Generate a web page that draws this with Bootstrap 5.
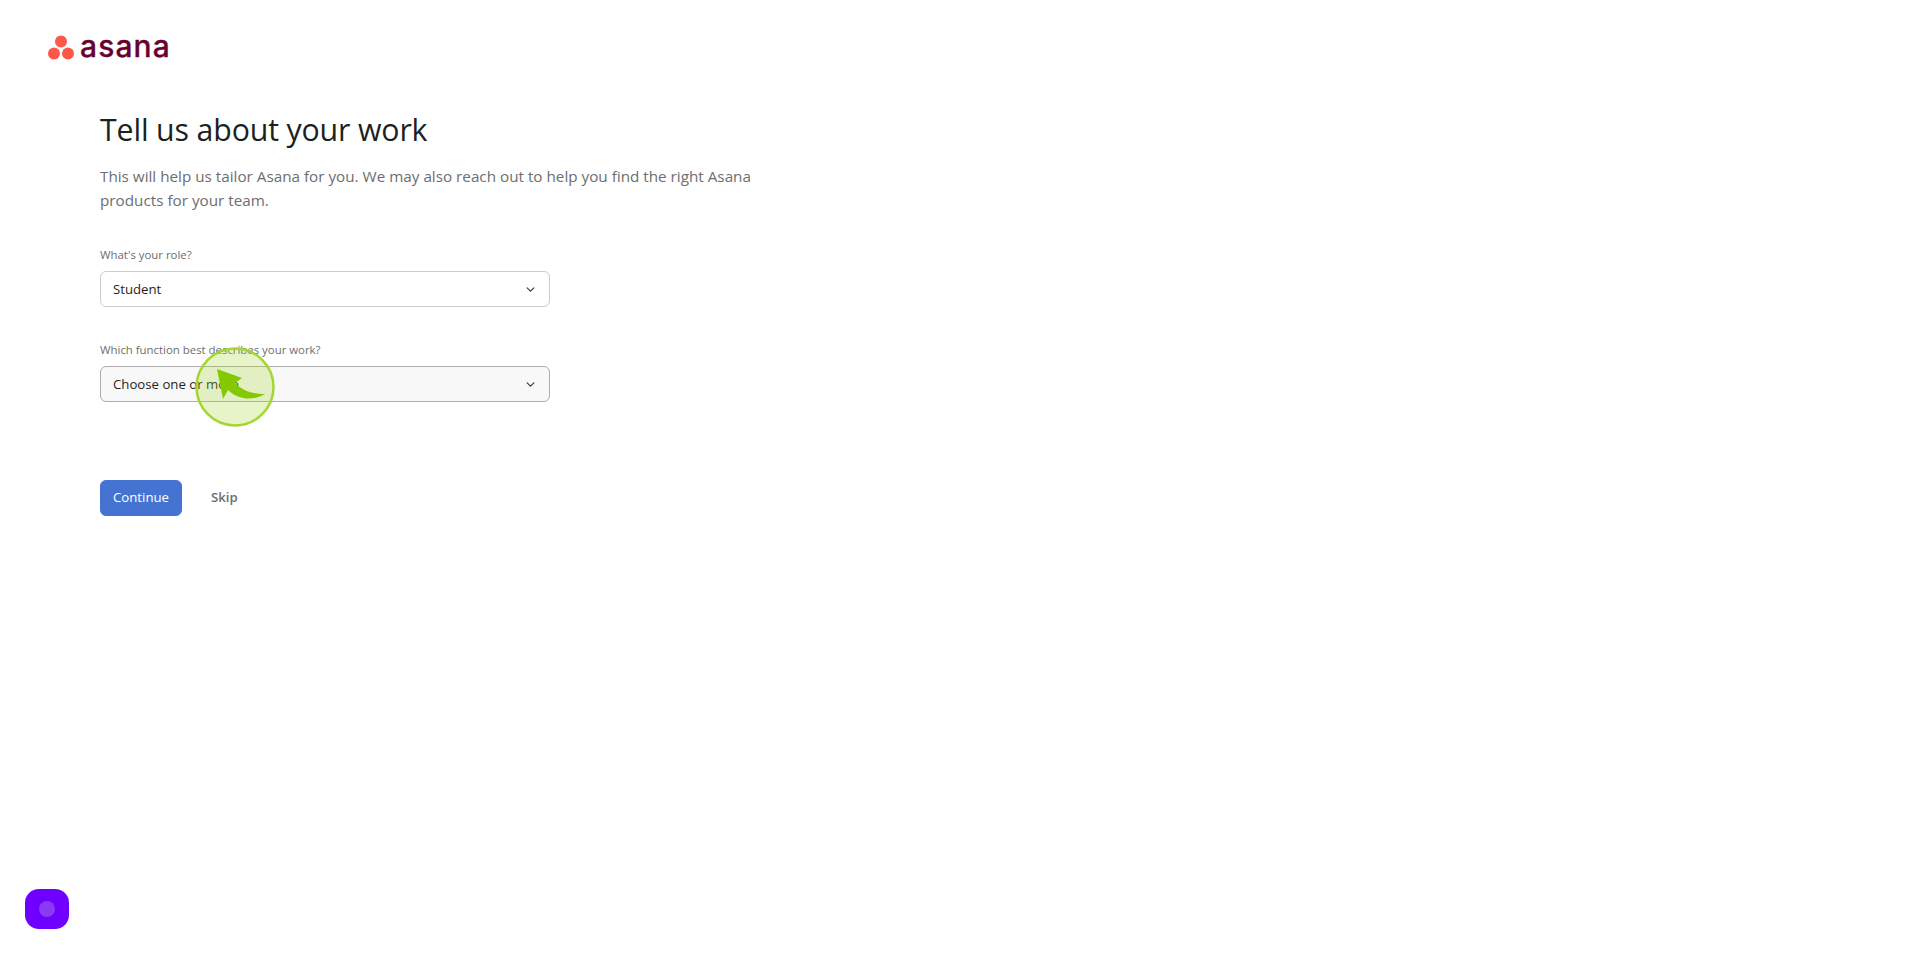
<!DOCTYPE html>
<html lang="en">

<head>
    <meta charset="UTF-8" />
    <meta name="viewport" content="width=device-width, initial-scale=1.0" />
    <title>Tell us about your work</title>
    <link href="https://cdn.jsdelivr.net/npm/bootstrap@5.3.0/dist/css/bootstrap.min.css" rel="stylesheet">
    <style>
        body,
        html {
            height: 100%;
            margin: 0;
            background-color: white;
            font-family: "Open Sans", "Noto Sans", sans-serif;
        }

        .page-wrap {
            min-height: 953px;
        }

        .top-logo {
            padding: 31px 0 0 48px;
            height: 109px;
            gap: 6px;
        }

        .logo-name {
            font-family: Inter, sans-serif;
            font-size: 30px;
            font-weight: 500;
            line-height: 30px;
            color: #690031;
            letter-spacing: 1.1px;
            -webkit-text-stroke: .3px #690031;
        }

        .work-form {
            padding-left: 100px;
        }

        .work-title {
            font-size: 30.3px;
            font-weight: 400;
            line-height: 42px;
            color: #1e1f21;
            margin: 0 0 13px;
            letter-spacing: -.15px;
        }

        .work-intro {
            width: 680px;
            font-size: 15.25px;
            line-height: 24px;
            color: #6d6e6f;
            margin: 0 0 34px;
        }

        .field-label {
            font-size: 11.4px;
            line-height: 18px;
            color: #6d6e6f;
            margin-bottom: 7px;
            display: block;
        }

        .field-box {
            width: 450px;
            height: 36px;
            font-size: 13.2px;
            line-height: 20px;
            color: #1e1f21;
            padding: 7px 30px 7px 12px;
            border-color: #cfcbcb;
            border-radius: 6px;
            background-size: 11px 9px;
            background-position: right 13px center;
        }

        .field-box.is-hover {
            background-color: #f9f8f8;
            border-color: #afabac;
        }

        .field-gap {
            margin-bottom: 34px;
        }

        .form-btns {
            margin-top: 78px;
            gap: 29px;
        }

        .btn-go {
            width: 82px;
            height: 36px;
            padding: 0;
            font-size: 13.2px;
            color: #fff;
            background-color: #4573d2;
            border-color: #4573d2;
            border-radius: 6px;
        }

        .btn-skip {
            font-size: 13.2px;
            font-weight: 600;
            color: #6d6e6f;
            padding: 0;
            border: 0;
        }

        .pointer-wrap {
            position: absolute;
            left: 195px;
            top: 347px;
            width: 80px;
            height: 80px;
        }

        .chat-widget {
            position: absolute;
            left: 25px;
            top: 889px;
            width: 44px;
            height: 40px;
            border-radius: 14px;
            background-color: #6f00ff;
        }

        .chat-dot {
            width: 16px;
            height: 16px;
            border-radius: 50%;
            background-color: #8a3af5;
        }
    </style>
</head>

<body>
    <div class="page-wrap position-relative overflow-hidden">
        <div class="top-logo d-flex align-items-start">
            <svg width="26" height="25" viewBox="0 0 26 25" class="mt-1">
                <circle cx="13" cy="6.5" r="6" fill="#ff584a" />
                <circle cx="6" cy="18.5" r="6" fill="#ff584a" />
                <circle cx="20" cy="18.5" r="6" fill="#ff584a" />
            </svg>
            <span class="logo-name">asana</span>
        </div>

        <div class="work-form">
            <h1 class="work-title">Tell us about your work</h1>
            <p class="work-intro">This will help us tailor Asana for you. We may also reach out to help you find the right Asana products for your team.</p>

            <div class="field-gap">
                <label class="field-label" for="role">What's your role?</label>
                <select id="role" class="form-select field-box">
                    <option>Student</option>
                </select>
            </div>

            <div>
                <label class="field-label" for="func">Which function best describes your work?</label>
                <select id="func" class="form-select field-box is-hover">
                    <option>Choose one or more</option>
                </select>
            </div>

            <div class="form-btns d-flex align-items-center">
                <button class="btn btn-go">Continue</button>
                <button class="btn btn-skip">Skip</button>
            </div>
        </div>

        <svg class="pointer-wrap" viewBox="0 0 80 80">
            <circle cx="40" cy="40" r="38.5" fill="#a5d631" fill-opacity=".27" stroke="#a3d72f" stroke-width="2.5" />
            <path d="M22 22 L47 31 L40 36 C47 43 56 47 70 47 C59 54 43 53 33 43 L28 52 Z" fill="#84c800" />
        </svg>

        <div class="chat-widget d-flex align-items-center justify-content-center">
            <div class="chat-dot"></div>
        </div>
    </div>

    <script src="https://cdn.jsdelivr.net/npm/bootstrap@5.3.0/dist/js/bootstrap.bundle.min.js"></script>
</body>

</html>
